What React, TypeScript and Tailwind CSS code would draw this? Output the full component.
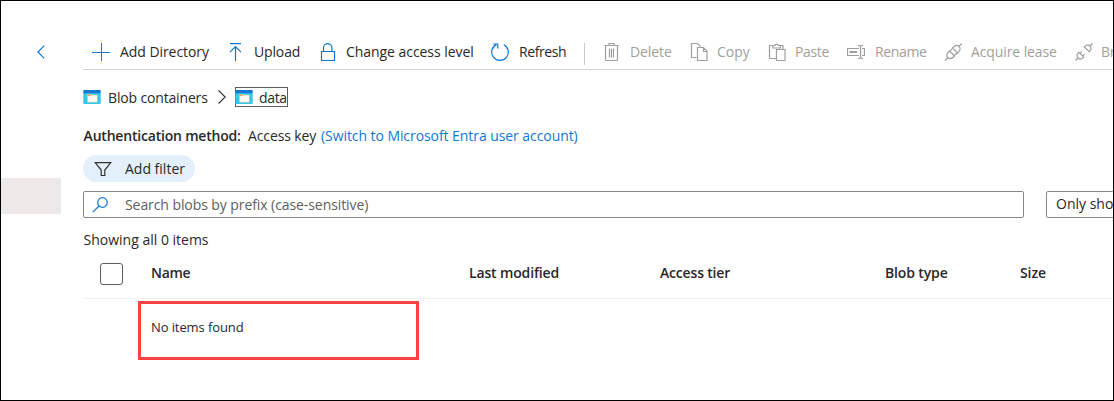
import type { ReactNode } from "react";

function Icon({ children, className = "" }: { children: ReactNode; className?: string }) {
  return (
    <svg
      viewBox="0 0 18 18"
      className={`h-[18px] w-[18px] shrink-0 ${className}`}
      fill="none"
      stroke="currentColor"
      strokeWidth="1.2"
    >
      {children}
    </svg>
  );
}

const icons = {
  plus: <path d="M9.5 0v18M0 9.5h18" strokeWidth="1" />,
  upload: <path d="M4 .6h11M9.5 18V4M4 9.2l5.5-5.5L15 9.2" />,
  lock: <path d="M3.5 8.5h13v9h-13zM5.5 8.5V4.8a4.2 4.2 0 0 1 8.4 0v3.7" />,
  refresh: <path d="M12.8 1.7a8.3 8.3 0 1 1-7.4-.1M2.2 1h4.6v4.6" />,
  trash: (
    <path d="M1.500 2.500h14M6 2.500v-2h5v2M2.500 2.500v14q0 1 1 1h10q1 0 1-1v-14M6.500 5.500v9M8.500 5.500v9M10.500 5.500v9" />
  ),
  copy: <path d="M6.5 14.5h-5V.5h6l3 3M7.500 4.500h6l3.500 3.500v9.500H7.500zM13.500 4.500v4H17" />,
  paste: (
    <path d="M8.500 15.500h-7v-13H5M12.500 2.500H15v3.500M5 5V2.500h2a1.800 1.800 0 0 1 3.500 0h2V5zM8.500 6.500H17v11H8.500z" />
  ),
  rename: (
    <>
      <path d="M12 5.500H.5v7H12M15 5.500h2.500v7H15M11 2.500h1.500l1 1 1-1H16M13.500 3.500v11M11 15.500h1.500l1-1 1 1H16" />
      <path d="M2.500 9H10" strokeWidth="2" />
    </>
  ),
  acquire: (
    <>
      <path d="M1 17.500l3-3M15 3.500l3-3M4 14.500c-2.200-2.200-.8-4.500 1.500-6.500l5 5c-2 2.300-4.300 3.700-6.500 1.500zM15 3.500c2.200 2.200.8 4.500-1.500 6.500l-5-5c2-2.300 4.300-3.700 6.500-1.500z" />
      <path d="M6 8.500L8.700 5M10 12.500L13.500 9.800" />
    </>
  ),
  breakLease: (
    <path d="M.5 17.500L3 15M15 3L17.500.5M3 15c-2-2-.8-4 1-5.700L8.700 14C7 15.800 5 17 3 15zM15 3c2 2 .8 4-1 5.700L9.300 4C11 2.200 13 1 15 3zM5 10.300l1.800-1.800M7.700 13l1.800-1.800" />
  ),
};

function Command({ icon, label, className }: { icon: ReactNode; label: string; className: string }) {
  return (
    <div className={`flex shrink-0 items-center whitespace-nowrap ${className}`}>
      {icon}
      <span>{label}</span>
    </div>
  );
}

function ContainerIcon() {
  return (
    <svg viewBox="0 0 18 14" className="h-[14px] w-[18px] shrink-0">
      <path d="M.3 3h17.400v10.200a.8.8 0 0 1-.8.8H1.100a.8.8 0 0 1-.8-.8z" fill="#32c8ea" />
      <path d="M1 0h16a.7.7 0 0 1 .7.700V3.200H.3V.7A.7.7 0 0 1 1 0z" fill="#0f78d4" />
      <path d="M4.500 4.500h4l1 .5H14.300V12.200H4.500z" fill="#fffaf2" stroke="#d9c7a0" strokeWidth=".4" />
      <path d="M4.500 4.300h3.500l.8 1-.8.8H4.500z" fill="#e5ab72" />
    </svg>
  );
}

export default function App() {
  return (
    <div className="flex h-[401px] w-[1114px] overflow-hidden border border-black bg-white font-['Open_Sans','Noto_Sans',sans-serif] text-[14px] leading-5 text-[#292827]">
      <aside className="flex w-[82px] shrink-0 flex-col">
        <svg viewBox="0 0 8 14" className="mt-[44px] ml-[35.500px] h-[14px] w-[8px]" fill="none" stroke="#0f78d4" strokeWidth="1.2">
          <path d="M7.200.6L1 7l6.200 6.400" />
        </svg>
        <div className="mt-[119px] h-9 w-[60px] bg-[#ebeae9]" />
      </aside>

      <main className="flex w-[1030px] shrink-0 flex-col overflow-hidden">
        <div className="mt-[34px] flex h-[35px] shrink-0 items-center border-b border-[#d2d2d2] pl-[9px]">
          <Command className="w-[134px] gap-[10px] tracking-[-0.06px]" label="Add Directory" icon={<Icon className="text-[#0f78d4]">{icons.plus}</Icon>} />
          <Command className="w-[92px] gap-[10px] tracking-[-0.15px]" label="Upload" icon={<Icon className="text-[#0f78d4]">{icons.upload}</Icon>} />
          <Command className="w-[173px] gap-[10px] tracking-[-0.05px]" label="Change access level" icon={<Icon className="text-[#0f78d4]">{icons.lock}</Icon>} />
          <Command className="w-[93px] gap-[10px] tracking-[-0.4px]" label="Refresh" icon={<Icon className="text-[#0f78d4]">{icons.refresh}</Icon>} />
          <div className="mt-1 mr-[18px] h-[22px] w-px shrink-0 bg-[#c8c8c8]" />
          <div className="flex items-center text-[#a19f9d]">
            <Command className="w-[87px] gap-[9px] tracking-[-0.1px]" label="Delete" icon={<Icon>{icons.trash}</Icon>} />
            <Command className="w-[78px] gap-[9px]" label="Copy" icon={<Icon>{icons.copy}</Icon>} />
            <Command className="w-[79px] gap-[9px] tracking-[-0.35px]" label="Paste" icon={<Icon>{icons.paste}</Icon>} />
            <Command className="w-[97px] gap-[10px] tracking-[-0.35px]" label="Rename" icon={<Icon>{icons.rename}</Icon>} />
            <Command className="w-[131px] gap-[9px] tracking-[-0.1px]" label="Acquire lease" icon={<Icon>{icons.acquire}</Icon>} />
            <Command className="w-[110px] gap-[8px] tracking-[-0.4px]" label="Break lease" icon={<Icon>{icons.breakLease}</Icon>} />
          </div>
        </div>

        <nav className="mt-[17px] flex h-5 shrink-0 items-center">
          <ContainerIcon />
          <span className="ml-[7px] w-[110px] pt-[2px] tracking-[-0.16px]">Blob containers</span>
          <svg viewBox="0 0 8 14" className="h-[14px] w-[8px]" fill="none" stroke="#323130" strokeWidth="1.1">
            <path d="M.6.500L7.200 7 .6 13.500" />
          </svg>
          <div className="ml-[9px] flex h-5 w-[53px] items-center border border-[#605e5c]">
            <div className="-ml-px flex">
              <ContainerIcon />
            </div>
            <span className="ml-[6px] pt-[2px] tracking-[-0.35px]">data</span>
          </div>
        </nav>

        <div className="mt-[19px] flex h-5 shrink-0 items-center whitespace-nowrap">
          <span className="w-[164px] pl-[0.6px] font-semibold tracking-[-0.2px]">Authentication method:</span>
          <span className="w-[73px] pl-[1px] tracking-[-0.12px]">Access key</span>
          <a className="pl-[1px] tracking-[-0.07px] text-[#0f78d4]">(Switch to Microsoft Entra user account)</a>
        </div>

        <button className="mt-[9px] flex h-[27px] w-[112px] shrink-0 items-center rounded-full bg-[#e3f0fb]">
          <svg viewBox="0 0 18 16" className="ml-[11px] h-4 w-[18px]" fill="none" stroke="#323130" strokeWidth="1.200">
            <path d="M1.200 1.600h15.600L10.800 9v5.500H7.200V9z" />
          </svg>
          <span className="ml-[13px]">Add filter</span>
        </button>

        <div className="mt-[9px] flex h-[27px] shrink-0">
          <div className="flex w-[941px] shrink-0 items-center rounded-[2px] border border-[#8a8886]">
            <svg viewBox="0 0 16 16" className="ml-[8px] h-4 w-4" fill="none" stroke="#0f78d4" strokeWidth="1.200">
              <circle cx="10.500" cy="5.500" r="4.800" />
              <path d="M7 9L.8 15.200" />
            </svg>
            <span className="ml-[17px] tracking-[-0.08px] text-[#605e5c]">Search blobs by prefix (case-sensitive)</span>
          </div>
          <div className="ml-[22px] flex w-[160px] shrink-0 items-center rounded-[2px] border border-[#8a8886] pb-[2px] pl-[9px] whitespace-nowrap">
            Only show active blobs
          </div>
        </div>

        <div className="mt-[12px] h-5 shrink-0 pl-[0.5px]">Showing all 0 items</div>

        <div className="flex h-[49px] w-[1100px] shrink-0 items-center border-b border-[#f1f1f1] font-semibold whitespace-nowrap">
          <div className="mr-[28px] mb-[1px] ml-[17px] h-[22px] w-[23px] shrink-0 rounded-[3px] border border-[#605e5c]" />
          <div className="flex pb-[2px]">
            <span className="w-[318px] tracking-[-0.3px]">Name</span>
            <span className="w-[191px] tracking-[-0.15px]">Last modified</span>
            <span className="w-[225px] tracking-[-0.18px]">Access tier</span>
            <span className="w-[135px] tracking-[-0.14px]">Blob type</span>
            <span className="tracking-[-0.1px]">Size</span>
          </div>
        </div>

        <div className="mt-[2px] ml-[55px] flex h-[59px] w-[281px] shrink-0 items-center border-[3px] border-[#fb4343] pb-[7px] pl-[10px] text-[13px] tracking-[-0.1px]">
          No items found
        </div>
      </main>
    </div>
  );
}
